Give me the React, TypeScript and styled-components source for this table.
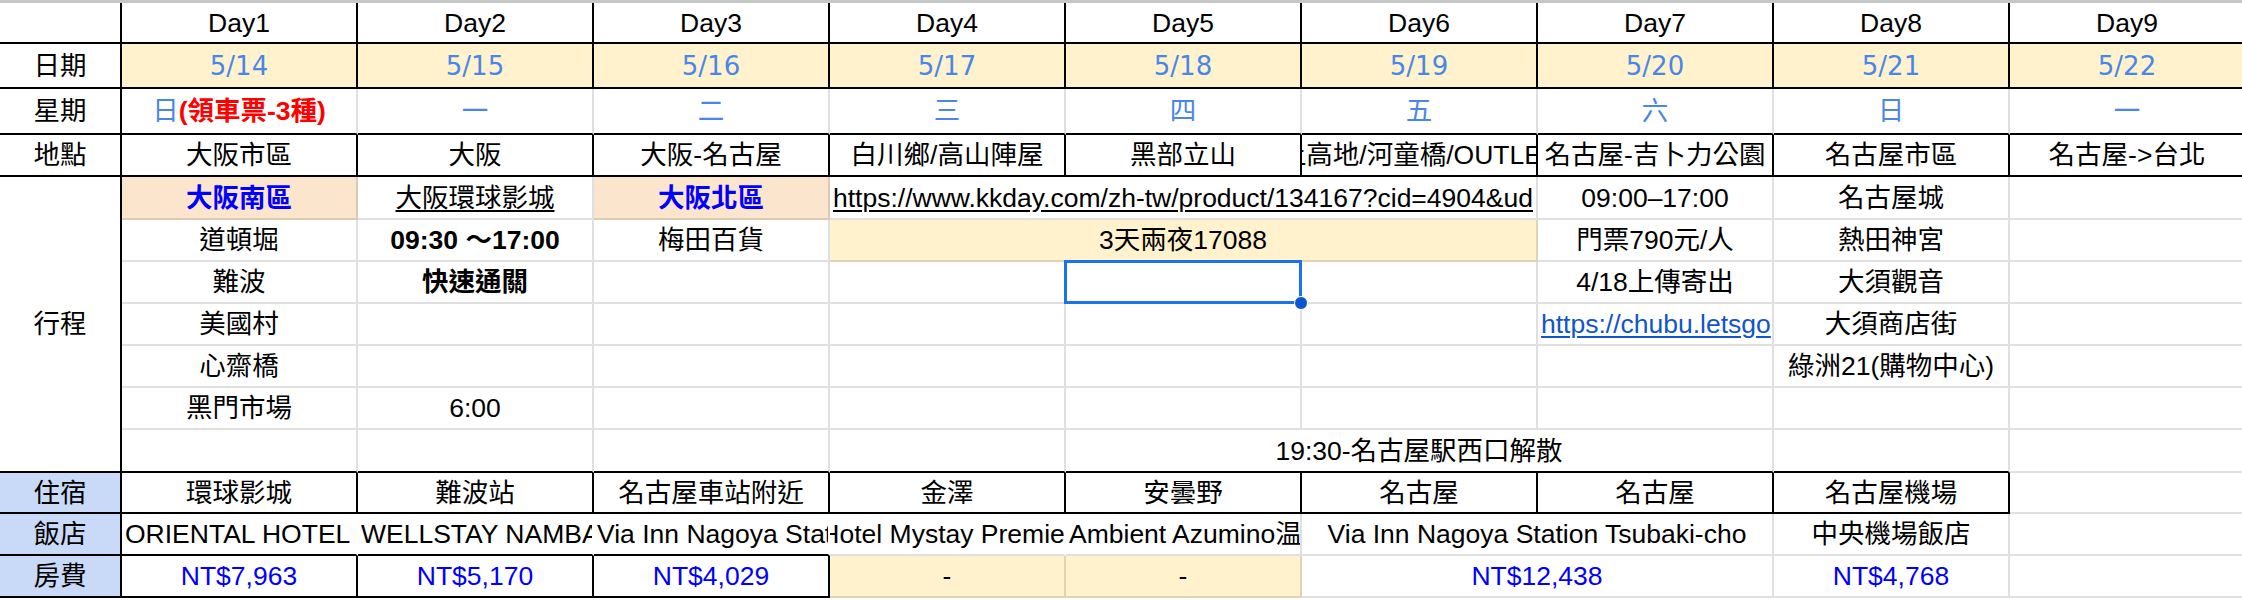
import React from "react";
import styled, { createGlobalStyle, css } from "styled-components";

const GlobalStyle = createGlobalStyle`
  html, body {
    margin: 0;
    padding: 0;
    background: #fff;
    overflow: hidden;
  }
  body {
    font-family: "Liberation Sans", "Noto Sans CJK TC", sans-serif;
  }
`;

// border colours used by the sheet
const BLACK = "#000";
const GRID = "rgba(0, 0, 0, 0.12)";
const NONE = "transparent";

const YELLOW = "#fff2cc";
const ORANGE = "#fce5cd";
const LIGHT_BLUE = "#c9daf8";

type Tone = "plain" | "date" | "weekday" | "strong" | "bold" | "url" | "link" | "price";

type CellData = {
  text?: React.ReactNode;
  span?: number;
  rows?: number;
  right?: string;
  bottom?: string;
  bg?: string;
  align?: "left" | "center";
  tone?: Tone;
  selected?: boolean;
};

const days = [1, 2, 3, 4, 5, 6, 7, 8, 9];

const Sheet = styled.div`
  display: grid;
  grid-template-columns: 122px repeat(9, 236px);
  grid-template-rows: 3px 41px 45px 46px 42px 43px repeat(5, 42px) 43px 41px 42px 42px;
  width: max-content;
  font-size: 26.5px;
  color: #000;
`;

const TopEdge = styled.div`
  grid-column: 1 / -1;
  background: #c4c7c5;
`;

const Box = styled.div<{
  $right: string;
  $bottom: string;
  $bg?: string;
  $align: "left" | "center";
  $span: number;
  $rows: number;
  $selected?: boolean;
}>`
  grid-column: span ${(p) => p.$span};
  grid-row: span ${(p) => p.$rows};
  box-sizing: border-box;
  display: flex;
  align-items: center;
  justify-content: ${(p) => (p.$align === "left" ? "flex-start" : "center")};
  padding: 0 ${(p) => (p.$align === "left" ? "3px" : "0")};
  overflow: ${(p) => (p.$selected ? "visible" : "hidden")};
  position: ${(p) => (p.$selected ? "relative" : "static")};
  white-space: nowrap;
  line-height: 30px;
  background: ${(p) => p.$bg ?? "transparent"};
  border-right: 2px solid ${(p) => p.$right};
  border-bottom: 2px solid ${(p) => p.$bottom};
`;

const toneCss: Record<Tone, ReturnType<typeof css> | string> = {
  plain: "",
  date: css`
    font-family: "DejaVu Sans", sans-serif;
    font-size: 26px;
    color: #4a86e8;
  `,
  weekday: css`
    color: #4a86e8;
  `,
  strong: css`
    color: #0000ff;
    font-weight: bold;
  `,
  bold: css`
    font-weight: bold;
  `,
  url: css`
    text-decoration: underline;
    text-underline-offset: 3px;
  `,
  link: css`
    color: #1155cc;
    text-decoration: underline;
    text-underline-offset: 3px;
  `,
  price: css`
    color: #0000ff;
  `,
};

const Text = styled.span<{ $tone: Tone }>`
  flex-shrink: 0;
  ${(p) => toneCss[p.$tone]}
`;

const Ink = styled.span<{ $color: string; $bold?: boolean }>`
  color: ${(p) => p.$color};
  font-weight: ${(p) => (p.$bold ? "bold" : "normal")};
`;

const Selection = styled.span`
  position: absolute;
  top: -2px;
  left: -2px;
  right: -2px;
  bottom: -2px;
  border: 3px solid #1a73e8;
  z-index: 2;
  pointer-events: none;
`;

const Handle = styled.span`
  position: absolute;
  right: -8px;
  bottom: -8px;
  width: 12px;
  height: 12px;
  border-radius: 50%;
  background: #0b57d0;
  border: 1px solid #fff;
  z-index: 3;
`;

const weekdayHead = (
  <>
    <Ink $color="#4a86e8">日</Ink>
    <Ink $color="#ff0000" $bold>
      (領車票-3種)
    </Ink>
  </>
);

const label = (text: string, bg?: string): CellData => ({ text, bg, right: BLACK, bottom: BLACK });

// plain 行程 cell with grey grid lines
const g = (text?: string, extra: Partial<CellData> = {}): CellData => ({
  text,
  right: GRID,
  bottom: GRID,
  ...extra,
});

const rows: CellData[][] = [
  [label(""), ...days.map((d) => label(`Day${d}`))],
  [
    label("日期"),
    ...["5/14", "5/15", "5/16", "5/17", "5/18", "5/19", "5/20", "5/21", "5/22"].map(
      (d): CellData => ({ text: d, tone: "date", bg: YELLOW, right: BLACK, bottom: BLACK })
    ),
  ],
  [
    label("星期"),
    { text: weekdayHead, right: GRID, bottom: BLACK },
    ...["一", "二", "三", "四", "五", "六", "日", "一"].map(
      (d): CellData => ({ text: d, tone: "weekday", right: GRID, bottom: BLACK })
    ),
  ],
  [
    label("地點"),
    ...[
      "大阪市區",
      "大阪",
      "大阪-名古屋",
      "白川鄉/高山陣屋",
      "黑部立山",
      "上高地/河童橋/OUTLET",
      "名古屋-吉卜力公園",
      "名古屋市區",
      "名古屋->台北",
    ].map((t) => label(t)),
  ],
  // 行程
  [
    { text: "行程", rows: 7, right: BLACK, bottom: BLACK },
    g("大阪南區", { tone: "strong", bg: ORANGE }),
    g("大阪環球影城", { tone: "url" }),
    g("大阪北區", { tone: "strong", bg: ORANGE }),
    g("https://www.kkday.com/zh-tw/product/134167?cid=4904&ud", { span: 3, align: "left", tone: "url" }),
    g("09:00–17:00"),
    g("名古屋城"),
    g(),
  ],
  [
    g("道頓堀"),
    g("09:30 ～17:00", { tone: "bold" }),
    g("梅田百貨"),
    g("3天兩夜17088", { span: 3, bg: YELLOW }),
    g("門票790元/人"),
    g("熱田神宮"),
    g(),
  ],
  [
    g("難波"),
    g("快速通關", { tone: "bold" }),
    g(),
    g(),
    g("", { selected: true }),
    g(),
    g("4/18上傳寄出"),
    g("大須觀音"),
    g(),
  ],
  [g("美國村"), g(), g(), g(), g(), g(), g("https://chubu.letsgo", { tone: "link", align: "left" }), g("大須商店街"), g()],
  [g("心齋橋"), g(), g(), g(), g(), g(), g(), g("綠洲21(購物中心)"), g()],
  [g("黑門市場"), g("6:00"), g(), g(), g(), g(), g(), g(), g()],
  [
    g("", { bottom: BLACK }),
    g("", { bottom: BLACK }),
    g("", { bottom: BLACK }),
    g("", { bottom: BLACK }),
    g("19:30-名古屋駅西口解散", { span: 3, bottom: BLACK }),
    g("", { bottom: BLACK }),
    g(),
  ],
  [
    label("住宿", LIGHT_BLUE),
    ...["環球影城", "難波站", "名古屋車站附近", "金澤", "安曇野", "名古屋", "名古屋", "名古屋機場"].map((t) =>
      label(t)
    ),
    g(),
  ],
  [
    label("飯店", LIGHT_BLUE),
    { text: "ORIENTAL HOTEL", align: "left", right: NONE, bottom: BLACK },
    { text: "WELLSTAY NAMBA", align: "left", right: NONE, bottom: BLACK },
    { text: "Via Inn Nagoya Station Tsubaki-cho", align: "left", right: NONE, bottom: BLACK },
    g("Hotel Mystay Premier", { right: NONE }),
    g("Ambient Azumino温泉", { align: "left" }),
    g("Via Inn Nagoya Station Tsubaki-cho", { span: 2 }),
    g("中央機場飯店"),
    g(),
  ],
  [
    label("房費", LIGHT_BLUE),
    { text: "NT$7,963", tone: "price", right: BLACK, bottom: BLACK },
    { text: "NT$5,170", tone: "price", right: BLACK, bottom: BLACK },
    { text: "NT$4,029", tone: "price", right: BLACK, bottom: BLACK },
    g("-", { bg: YELLOW }),
    g("-", { bg: YELLOW }),
    g("NT$12,438", { tone: "price", span: 2 }),
    g("NT$4,768", { tone: "price" }),
    g(),
  ],
];

const Cell = ({ cell }: { cell: CellData }) => (
  <Box
    $right={cell.right ?? GRID}
    $bottom={cell.bottom ?? GRID}
    $bg={cell.bg}
    $align={cell.align ?? "center"}
    $span={cell.span ?? 1}
    $rows={cell.rows ?? 1}
    $selected={cell.selected}
  >
    {cell.text ? <Text $tone={cell.tone ?? "plain"}>{cell.text}</Text> : null}
    {cell.selected && (
      <>
        <Selection />
        <Handle />
      </>
    )}
  </Box>
);

const App = () => (
  <>
    <GlobalStyle />
    <Sheet>
      <TopEdge />
      {rows.map((row, r) => row.map((cell, c) => <Cell key={`${r}-${c}`} cell={cell} />))}
    </Sheet>
  </>
);

export default App;
